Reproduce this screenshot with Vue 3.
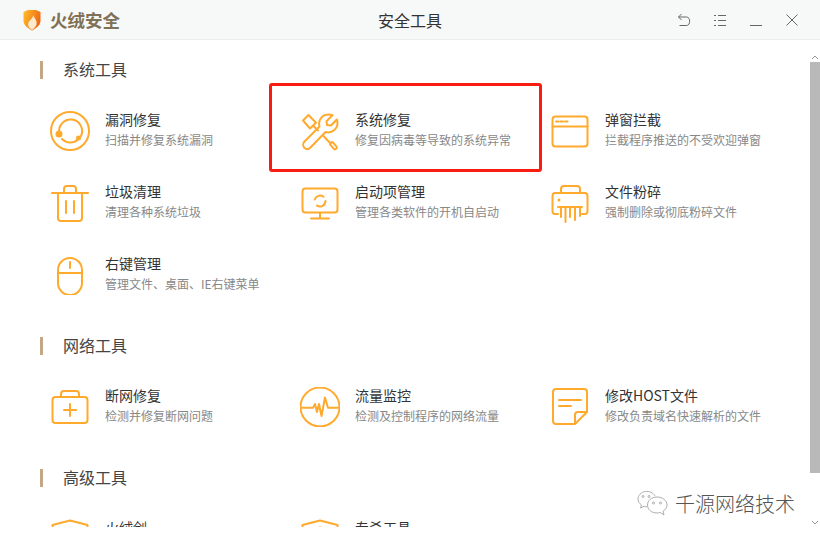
<script setup>
// icon bodies are drawn in a 40x40 box, stroke comes from .tool-icon
const icons = {
  leak: '<circle cx="20" cy="20" r="19"/><path d="M9.500 23A11.500 11.500 0 1 1 31 25M28 28.500A11.500 11.500 0 0 1 12 28"/><circle class="dot" cx="9" cy="23" r="3.500"/><circle class="dot" cx="28.500" cy="27" r="2.500"/>',
  repair: '<path d="M4.500 30.500L19.500 15.500C18 10 21 3.500 29 3.500C30.500 3.500 31.500 3.800 32.500 4.200L26.500 10.200L27 14L31 14.500L36.800 8.500C37.500 10 37.500 11 37.500 12C37.500 19 30.500 22.500 25.500 21L10.500 36.500C8.500 38.500 6 38.300 4.500 37C2.800 35.300 2.800 32.300 4.500 30.500Z"/><path d="M3 9.500L8.500 4L16 11.700L10 17.500ZM13.500 15L18 19.500M23.500 25L30.500 32.500"/><rect x="29.500" y="33" width="8" height="3.500" rx="1.700" transform="rotate(50 33.500 34.750)"/>',
  popup: '<rect x="2.500" y="5.500" width="35" height="30" rx="3"/><path d="M2.500 15.500H37.500M6 10.500H8.500M10.500 10.500H13M15 10.500H17.500"/>',
  trash: '<path d="M2 10H38M14 10V6Q14 3 17 3H23Q26 3 26 6V10M8 10V35Q8 38 11 38H29Q32 38 32 35V10M16 18V30M24 18V30"/>',
  boot: '<rect x="2.500" y="5.500" width="35" height="24" rx="3"/><path d="M20 30V35M11 35.500H29M14.800 16.500A5.500 5.500 0 0 1 23.500 13.800M25.500 18A5.500 5.500 0 0 1 17 22.600"/>',
  shred: '<path d="M11 10V6Q11 3 14 3H27Q30 3 30 6V10M8 31H5Q2.500 31 2.500 28V13Q2.500 10 5 10H35Q37.500 10 37.500 13V28Q37.500 31 35 31H32M8 24H32M11 24V34M15.500 24V39M20 24V34M25 24V37M30 24V33"/><circle class="dot" cx="9" cy="17" r="1.500"/>',
  mouse: '<rect x="8" y="3" width="24" height="37" rx="12"/><path d="M8 18H32M20 7V13"/>',
  kit: '<rect x="2.500" y="10" width="35" height="26" rx="3"/><path d="M11 10V7Q11 4 14 4H26Q29 4 29 7V10M20 17V29M14 23H26"/>',
  flow: '<circle cx="20" cy="20" r="19.500"/><path d="M1 20.700H13L15 17L17 25L19 17L21.500 29L25 10.500L28 20.700H39"/>',
  note: '<path d="M25 37H6Q3 37 3 34V5Q3 2 6 2H34Q37 2 37 5V25L25 37V28Q25 25 28 25H37M9 13H31M9 19H21"/>',
  shield: '<path d="M2.500 6L20 1.500L37.500 6V24C37.500 31 28 36 20 39C12 36 2.500 31 2.500 24Z"/>',
  kill: '<path d="M2.500 6L20 1.500L37.500 6V24C37.500 31 28 36 20 39C12 36 2.500 31 2.500 24Z"/><path d="M15 11Q20 6 25 11"/>',
}

const sections = [
  {
    title: '系统工具',
    tools: [
      { icon: 'leak', name: '漏洞修复', desc: '扫描并修复系统漏洞' },
      { icon: 'repair', name: '系统修复', desc: '修复因病毒等导致的系统异常' },
      { icon: 'popup', name: '弹窗拦截', desc: '拦截程序推送的不受欢迎弹窗' },
      { icon: 'trash', name: '垃圾清理', desc: '清理各种系统垃圾' },
      { icon: 'boot', name: '启动项管理', desc: '管理各类软件的开机自启动' },
      { icon: 'shred', name: '文件粉碎', desc: '强制删除或彻底粉碎文件' },
      { icon: 'mouse', name: '右键管理', desc: '管理文件、桌面、IE右键菜单' },
    ],
  },
  {
    title: '网络工具',
    tools: [
      { icon: 'kit', name: '断网修复', desc: '检测并修复断网问题' },
      { icon: 'flow', name: '流量监控', desc: '检测及控制程序的网络流量' },
      { icon: 'note', name: '修改HOST文件', desc: '修改负责域名快速解析的文件' },
    ],
  },
  {
    title: '高级工具',
    tools: [
      { icon: 'shield', name: '火绒剑', desc: '' },
      { icon: 'kill', name: '专杀工具', desc: '' },
    ],
  },
]
</script>

<template>
  <div class="window">
    <header class="titlebar">
      <div class="brand">
        <svg class="brand-logo" width="18" height="22" viewBox="0 0 18 22">
          <defs>
            <linearGradient id="shield-fill" x1="0" y1="0" x2="1" y2="0.4">
              <stop offset="0" stop-color="#ffc02a" />
              <stop offset="1" stop-color="#ee6a14" />
            </linearGradient>
          </defs>
          <path d="M0.500 3L5 1H13L17.500 3V12C17.500 16.500 12.500 19.500 9 21.500C5.500 19.500 0.500 16.500 0.500 12Z" fill="url(#shield-fill)" />
          <path d="M10.500 6C11 10 14.500 11 13.500 15.500C12.800 18 10.500 20 9 20.700C6.500 19.500 4.500 17 5.300 14C6.200 11 9.500 10 10.500 6Z" fill="#fde9cc" />
        </svg>
        <span class="brand-name">火绒安全</span>
      </div>
      <div class="window-title">安全工具</div>
      <div class="controls">
        <svg width="14" height="14" viewBox="0 0 14 14"><path d="M4.500 1L1.500 4L4.500 7M1.500 4H9.500C13.700 4 13.700 12.500 9.500 12.500H2.500" /></svg>
        <svg width="14" height="14" viewBox="0 0 14 14"><path d="M1 2.500H3M1 7.500H3M1 12.500H3M5 2.500H13M5 7.500H13M5 12.500H13" /></svg>
        <svg width="14" height="14" viewBox="0 0 14 14"><path d="M1 12.500H13" /></svg>
        <svg width="14" height="14" viewBox="0 0 14 14"><path d="M1.500 1.500L12.500 12.500M12.500 1.500L1.500 12.500" /></svg>
      </div>
    </header>

    <div class="body">
      <main class="content">
        <section v-for="s in sections" :key="s.title" class="section">
          <h2 class="section-title">{{ s.title }}</h2>
          <div class="tool-grid">
            <div v-for="t in s.tools" :key="t.name" class="tool">
              <svg class="tool-icon" width="40" height="40" viewBox="0 0 40 40" v-html="icons[t.icon]" />
              <div class="tool-text">
                <div class="tool-name">{{ t.name }}</div>
                <div class="tool-desc">{{ t.desc }}</div>
              </div>
            </div>
          </div>
        </section>
      </main>

      <aside class="scrollbar">
        <svg width="8" height="5" viewBox="0 0 8 5"><path d="M1 4L4 1L7 4" /></svg>
        <div class="thumb"></div>
        <svg class="arrow-down" width="8" height="5" viewBox="0 0 8 5"><path d="M1 1L4 4L7 1" /></svg>
      </aside>
    </div>

    <!-- annotations that sit on top of the screenshot -->
    <div class="highlight"></div>
    <div class="watermark">
      <svg width="31" height="28" viewBox="0 0 31 28">
        <path d="M18 6C16 2.500 12 1 8.500 1.500C4 2 1 5.500 1 9C1 11.500 2.300 13.500 4.500 15L3.500 18L7 16.300C8 16.700 9 16.800 10 16.800" />
        <path d="M20 7C14.500 7 10.500 10.500 10.500 15C10.500 19.500 14.500 23 20 23C21.200 23 22.300 22.800 23.300 22.500L27 25L26 21.300C28.500 19.800 30 17.500 30 15C30 10.500 25.500 7 20 7Z" />
        <circle cx="6" cy="6.500" r="1" />
        <circle cx="12" cy="6.500" r="1" />
        <circle cx="16.500" cy="13" r="1" />
        <circle cx="23.500" cy="13" r="1" />
      </svg>
      <span>千源网络技术</span>
    </div>
  </div>
</template>

<style>
html, body {
  margin: 0;
  background: #fff;
  overflow: hidden;
}
</style>

<style scoped>
.window {
  position: relative;
  width: 820px;
  height: 540px;
  overflow: hidden;
  background: #fff;
  font-family: "Noto Sans CJK SC", "Microsoft YaHei", sans-serif;
}

/* ── Title bar ─────────────────────────────── */
.titlebar {
  height: 39px;
  display: grid;
  grid-template-columns: 1fr auto 1fr;
  align-items: center;
  background: #f7f8f8;
  border-bottom: 1px solid #ececec;
}
.brand {
  display: flex;
  align-items: center;
  gap: 9px;
  padding-left: 23px;
}
.brand-logo {
  display: block;
}
.brand-name {
  font-size: 17.500px;
  font-weight: 700;
  color: #7f7156;
}
.window-title {
  font-size: 16px;
  color: #333;
}
.controls {
  align-self: start;
  display: flex;
  justify-content: flex-end;
  gap: 22px;
  padding: 13px 21px 0 0;
}
.controls svg {
  display: block;
  fill: none;
  stroke: #666;
  stroke-width: 1;
}

/* ── Body ──────────────────────────────────── */
.body {
  display: flex;
  height: 500px;
}
.content {
  flex: 1;
  box-sizing: border-box;
  height: 487px; /* list is cut off just above the bottom edge */
  overflow: hidden;
  padding: 21px 0 0 40px;
}
.section + .section {
  margin-top: 26px;
}
.section-title {
  margin: 0 0 16px;
  height: 18px;
  line-height: 16px;
  padding-left: 20px;
  border-left: 3px solid #c2a887;
  font-size: 16px;
  font-weight: 400;
  color: #444;
}
.tool-grid {
  display: grid;
  grid-template-columns: repeat(3, 250px);
  grid-auto-rows: 72px;
  padding-left: 10px;
}
.tool {
  display: flex;
  align-items: center;
  gap: 15px;
}
.tool-icon {
  flex: none;
  fill: none;
  stroke: #ffaa2c;
  stroke-width: 2;
  stroke-linecap: round;
  stroke-linejoin: round;
}
.tool-icon :deep(.dot) {
  fill: #ffaa2c;
  stroke: none;
}
.tool-text {
  margin-top: -3px;
}
.tool-name {
  font-size: 14px;
  line-height: 20px;
  color: #333;
}
.tool-desc {
  min-height: 20px;
  margin-top: 1px;
  font-size: 12px;
  line-height: 20px;
  color: #888;
}

/* ── Scrollbar ─────────────────────────────── */
.scrollbar {
  flex: none;
  width: 10px;
  display: flex;
  flex-direction: column;
  align-items: center;
  padding-top: 15px;
}
.scrollbar svg {
  flex: none;
  fill: none;
  stroke: #999;
}
.thumb {
  flex: none;
  width: 10px;
  height: 411px;
  margin-top: 2px;
  background: #b9b9b9;
}
.arrow-down {
  margin-top: 47px;
}

/* ── Overlays ──────────────────────────────── */
.highlight {
  position: absolute;
  left: 269px;
  top: 83px;
  width: 267px;
  height: 83px;
  border: 3px solid #f91c13;
  border-radius: 3px;
}
.watermark {
  position: absolute;
  left: 637px;
  top: 490px;
  display: flex;
  align-items: center;
  gap: 7px;
  font-size: 20px;
  font-weight: 300;
  line-height: 28px;
  color: #555;
  text-shadow: 0 0 2px #fff;
}
.watermark svg {
  fill: none;
  stroke: #999;
  stroke-width: 0.800;
}
</style>
